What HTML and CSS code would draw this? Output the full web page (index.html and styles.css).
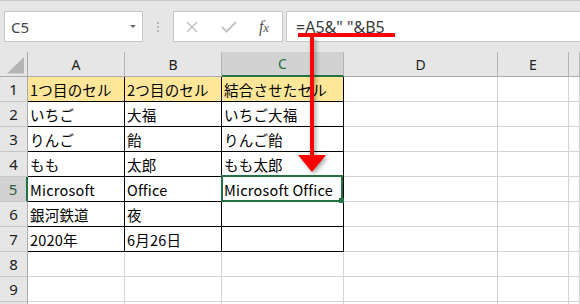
FILE: index.html
```html
<!DOCTYPE html>
<html lang="ja">
<head>
<meta charset="utf-8">
<title>Excel</title>
<link rel="stylesheet" href="styles.css">
</head>
<body>
<div class="app">
  <div class="fbar">
    <div class="namebox"><span class="ref">C5</span><span class="caret"></span></div>
    <div class="grip"><i></i><i></i><i></i></div>
    <div class="fxbox">
      <span class="btn"><svg width="12" height="12" viewBox="0 0 12 12"><path d="M1 1 L11 11 M11 1 L1 11" stroke="#c3c3c3" stroke-width="1.6" fill="none"/></svg></span>
      <span class="btn b2"><svg width="16" height="12" viewBox="0 0 16 12"><path d="M1 6 L5.5 10.5 L15 1" stroke="#c3c3c3" stroke-width="2" fill="none"/></svg></span>
      <span class="btn b3 fx"><i>f</i><i class="x">x</i></span>
    </div>
    <div class="formula">=A5&amp;" "&amp;B5</div>
  </div>
  <div class="sheet">
    <div class="corner"><svg width="27" height="24" viewBox="0 0 27 24"><polygon points="7,21.5 24,21.5 24,5" fill="#b4b4b4"/></svg></div>
    <div class="ch">A</div><div class="ch">B</div><div class="ch sel">C</div><div class="ch">D</div><div class="ch">E</div><div class="ch"></div>

    <div class="rh">1</div><div class="c t y">1つ目のセル</div><div class="c t y">2つ目のセル</div><div class="c t y">結合させたセル</div><div class="c"></div><div class="c"></div><div class="c"></div>
    <div class="rh">2</div><div class="c t">いちご</div><div class="c t">大福</div><div class="c t">いちご大福</div><div class="c"></div><div class="c"></div><div class="c"></div>
    <div class="rh">3</div><div class="c t">りんご</div><div class="c t">飴</div><div class="c t">りんご飴</div><div class="c"></div><div class="c"></div><div class="c"></div>
    <div class="rh">4</div><div class="c t">もも</div><div class="c t">太郎</div><div class="c t">もも太郎</div><div class="c"></div><div class="c"></div><div class="c"></div>
    <div class="rh sel">5</div><div class="c t">Microsoft</div><div class="c t">Office</div><div class="c t active">Microsoft Office</div><div class="c"></div><div class="c"></div><div class="c"></div>
    <div class="rh">6</div><div class="c t">銀河鉄道</div><div class="c t">夜</div><div class="c t"></div><div class="c"></div><div class="c"></div><div class="c"></div>
    <div class="rh">7</div><div class="c t">2020年</div><div class="c t">6月26日</div><div class="c t"></div><div class="c"></div><div class="c"></div><div class="c"></div>
    <div class="rh">8</div><div class="c"></div><div class="c"></div><div class="c"></div><div class="c"></div><div class="c"></div><div class="c"></div>
    <div class="rh">9</div><div class="c"></div><div class="c"></div><div class="c"></div><div class="c"></div><div class="c"></div><div class="c"></div>
    <div class="rh"></div><div class="c"></div><div class="c"></div><div class="c"></div><div class="c"></div><div class="c"></div><div class="c"></div>
  </div>
  <svg class="annot" width="580" height="304" viewBox="0 0 580 304">
    <rect x="298" y="33" width="97" height="4" fill="#ff0000"/>
    <g class="arrow">
      <rect x="310" y="36" width="4" height="121" fill="#ff0000"/>
      <polygon points="298,155 326,155 312,172" fill="#ff0000"/>
    </g>
  </svg>
</div>
</body>
</html>
```

FILE: styles.css
```css
body {
  margin: 0;
  background: #ffffff;
}

.app {
  position: relative;
  width: 580px;
  height: 304px;
  overflow: hidden;
  font-family: "Noto Sans", "Liberation Sans", sans-serif;
}

/* ---------- formula bar ---------- */
.fbar {
  display: flex;
  align-items: flex-start;
  height: 52px;
  box-sizing: border-box;
  border-top: 1px solid #cacaca;
  padding: 10px 0 0 4px;
  background: #e6e6e6;
}

.namebox {
  width: 139px;
  height: 31px;
  box-sizing: border-box;
  background: #ffffff;
  border: 1px solid #c6c6c6;
  display: flex;
  align-items: center;
  justify-content: space-between;
  padding: 0 6px 0 6px;
}

.ref {
  font-size: 15px;
  color: #444444;
}

.caret {
  width: 0;
  height: 0;
  border-left: 3px solid transparent;
  border-right: 3px solid transparent;
  border-top: 3px solid #666666;
}

.grip {
  width: 30px;
  height: 31px;
  display: flex;
  flex-direction: column;
  align-items: center;
  justify-content: center;
  gap: 2px;
}

.grip i {
  display: block;
  width: 2px;
  height: 2px;
  background: #b5b5b5;
}

.fxbox {
  width: 110px;
  height: 31px;
  box-sizing: border-box;
  background: #ffffff;
  border: 1px solid #c6c6c6;
  display: flex;
  align-items: center;
  padding-left: 6px;
}

.btn {
  width: 24px;
  display: flex;
  justify-content: center;
  align-items: center;
}

.b2 {
  margin-left: 13px;
}

.b3 {
  margin-left: 11px;
}

.fx {
  font-family: "Liberation Serif", serif;
  font-style: italic;
  font-size: 16px;
  color: #555555;
  align-items: baseline;
}

.fx i {
  font-style: italic;
}

.fx .x {
  font-size: 13px;
}

.formula {
  flex: 1;
  margin-left: 3px;
  margin-right: -4px;
  height: 31px;
  box-sizing: border-box;
  background: #ffffff;
  border: 1px solid #c6c6c6;
  display: flex;
  align-items: center;
  padding-left: 9px;
  font-size: 16px;
  color: #3a3a3a;
  white-space: pre;
}

/* ---------- sheet ---------- */
.sheet {
  display: grid;
  grid-template-columns: 28px 97px 97px 122px 154px 71px 1fr;
  grid-auto-rows: 25px;
  height: 252px;
  overflow: hidden;
  background: #ffffff;
}

.sheet > div {
  box-sizing: border-box;
  border-right: 1px solid #d4d4d4;
  border-bottom: 1px solid #d4d4d4;
}

.corner {
  background: #e6e6e6;
  border-right-color: #ababab !important;
  border-bottom-color: #ababab !important;
}

.corner svg {
  display: block;
}

.ch {
  background: #e6e6e6;
  border-right-color: #b4b4b4 !important;
  border-bottom-color: #ababab !important;
  display: flex;
  align-items: center;
  justify-content: center;
  font-size: 14px;
  color: #222222;
}

.ch.sel {
  background: #d2d2d2;
  color: #217346;
  border-bottom: 2px solid #217346 !important;
}

.rh {
  background: #e6e6e6;
  border-right-color: #ababab !important;
  border-bottom-color: #c6c6c6 !important;
  display: flex;
  align-items: center;
  justify-content: center;
  font-size: 15px;
  color: #222222;
}

.rh.sel {
  background: #d2d2d2;
  color: #2b5f41;
  border-right: 2px solid #217346 !important;
}

.c {
  font-family: "Noto Sans CJK JP", "Noto Sans", sans-serif;
  font-size: 14.5px;
  color: #000000;
  padding-left: 2px;
  display: flex;
  align-items: center;
  white-space: nowrap;
  letter-spacing: 0.2px;
}

.sheet > .t {
  border-right-color: #000000;
  border-bottom-color: #000000;
}

.y {
  background: #ffe699;
}

.active {
  position: relative;
}

.active::before {
  content: "";
  position: absolute;
  left: -1px;
  top: -2px;
  right: 0;
  bottom: -1px;
  border: 2px solid #217346;
}

.active::after {
  content: "";
  position: absolute;
  right: -1px;
  bottom: -2px;
  width: 5px;
  height: 5px;
  background: #217346;
}

/* ---------- annotation ---------- */
.annot {
  position: absolute;
  left: 0;
  top: 0;
  pointer-events: none;
}

.arrow {
  filter: drop-shadow(2px 2px 2px rgba(0, 0, 0, 0.35));
}
```
